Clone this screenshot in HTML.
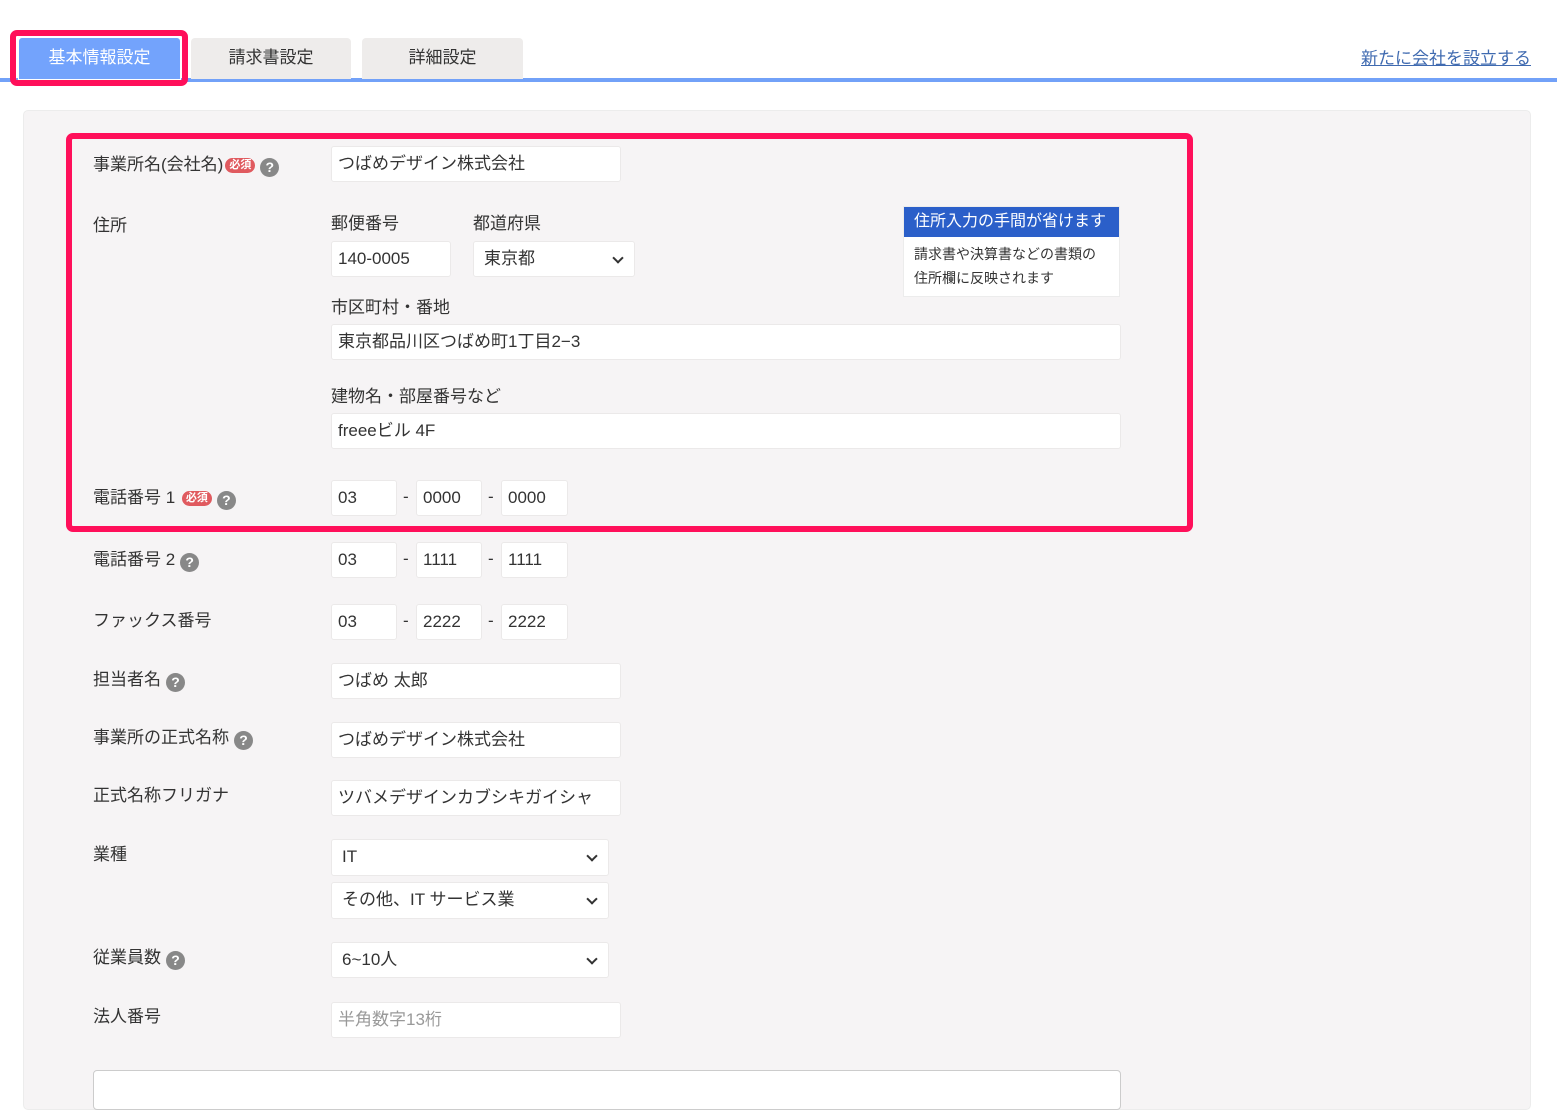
<!DOCTYPE html>
<html><head><meta charset="utf-8">
<style>
*{margin:0;padding:0;box-sizing:border-box}
body{width:1557px;height:1080px;overflow:hidden;background:#fff;font-family:"Liberation Sans","Noto Sans CJK JP",sans-serif;color:#333;font-size:17px;position:relative}
.a{position:absolute}
.tab{position:absolute;top:38px;height:41px;line-height:40px;text-align:center;background:#eeeceb;border-radius:4px 4px 0 0;font-size:17px;color:#333}
.in{position:absolute;background:#fff;border:1px solid #ebe9e9;border-radius:3px;height:36px;line-height:34px;padding-left:6px;font-size:17px;color:#333;white-space:nowrap}
.sel{padding-left:10px}
.sel:after{content:"";position:absolute;right:12px;top:12px;width:6px;height:6px;border-right:2px solid #333;border-bottom:2px solid #333;transform:rotate(45deg)}
.lb{position:absolute;left:93px;font-size:17px;white-space:nowrap;line-height:24px}
.req{display:inline-block;background:#e05a5f;color:#fff;font-size:11px;font-weight:bold;border-radius:8px;padding:0 4px;height:15px;line-height:15px;vertical-align:2px;margin-left:2px}
.q{display:inline-block;width:19px;height:19px;border-radius:50%;background:#888;color:#fff;font-size:14px;font-weight:bold;text-align:center;line-height:19px;vertical-align:-2px;margin-left:5px}
.d{position:absolute;font-size:17px}
</style></head><body>
<div class="a" style="left:0;top:78px;width:1557px;height:4px;background:#72a1f8"></div>
<div class="tab" style="left:18px;top:37px;width:163px;height:43px;background:#73a3fc;color:#fff;border:1px solid #fff">基本情報設定</div>
<div class="a" style="left:10px;top:30px;width:178px;height:56px;border:6px solid #ff0f5a;border-radius:7px"></div>
<div class="tab" style="left:191px;width:160px">請求書設定</div>
<div class="tab" style="left:362px;width:161px">詳細設定</div>
<div class="a" style="left:1361px;top:44px;font-size:17px;color:#3f6ab0;text-decoration:underline">新たに会社を設立する</div>

<div class="a" style="left:23px;top:110px;width:1508px;height:1000px;background:#f6f4f5;border:1px solid #ececec;border-radius:5px"></div>

<div class="lb" style="top:153px">事業所名(会社名)<span class="req">必須</span><span class="q">?</span></div>
<div class="in" style="left:331px;top:146px;width:290px">つばめデザイン株式会社</div>

<div class="lb" style="top:214px">住所</div>
<div class="d" style="left:331px;top:209px">郵便番号</div>
<div class="d" style="left:473px;top:209px">都道府県</div>
<div class="in" style="left:331px;top:241px;width:120px">140-0005</div>
<div class="in sel" style="left:473px;top:241px;width:162px">東京都</div>
<div class="a" style="left:903px;top:206px;width:217px;height:91px;background:#fff;border:1px solid #ececec">
<div style="background:#2b5fc9;color:#fff;height:30px;line-height:29px;padding-left:10px;font-size:16px">住所入力の手間が省けます</div>
<div style="padding:5px 0 0 10px;font-size:14px;line-height:24px;color:#333">請求書や決算書などの書類の<br>住所欄に反映されます</div>
</div>
<div class="d" style="left:331px;top:293px">市区町村・番地</div>
<div class="in" style="left:331px;top:324px;width:790px">東京都品川区つばめ町1丁目2−3</div>
<div class="d" style="left:331px;top:382px">建物名・部屋番号など</div>
<div class="in" style="left:331px;top:413px;width:790px">freeeビル 4F</div>

<div class="lb" style="top:486px">電話番号 1 <span class="req">必須</span><span class="q">?</span></div>
<div class="in" style="left:331px;top:480px;width:66px">03</div><div class="d" style="left:403px;top:487px">-</div>
<div class="in" style="left:416px;top:480px;width:66px">0000</div><div class="d" style="left:488px;top:487px">-</div>
<div class="in" style="left:501px;top:480px;width:67px">0000</div>

<div class="a" style="left:66px;top:133px;width:1127px;height:399px;border:6px solid #ff0f5a;border-radius:7px"></div>

<div class="lb" style="top:548px">電話番号 2<span class="q">?</span></div>
<div class="in" style="left:331px;top:542px;width:66px">03</div><div class="d" style="left:403px;top:549px">-</div>
<div class="in" style="left:416px;top:542px;width:66px">1111</div><div class="d" style="left:488px;top:549px">-</div>
<div class="in" style="left:501px;top:542px;width:67px">1111</div>

<div class="lb" style="top:609px">ファックス番号</div>
<div class="in" style="left:331px;top:604px;width:66px">03</div><div class="d" style="left:403px;top:611px">-</div>
<div class="in" style="left:416px;top:604px;width:66px">2222</div><div class="d" style="left:488px;top:611px">-</div>
<div class="in" style="left:501px;top:604px;width:67px">2222</div>

<div class="lb" style="top:668px">担当者名<span class="q">?</span></div>
<div class="in" style="left:331px;top:663px;width:290px">つばめ 太郎</div>
<div class="lb" style="top:726px">事業所の正式名称<span class="q">?</span></div>
<div class="in" style="left:331px;top:722px;width:290px">つばめデザイン株式会社</div>
<div class="lb" style="top:784px">正式名称フリガナ</div>
<div class="in" style="left:331px;top:780px;width:290px">ツバメデザインカブシキガイシャ</div>
<div class="lb" style="top:843px">業種</div>
<div class="in sel" style="left:331px;top:839px;width:278px;height:37px">IT</div>
<div class="in sel" style="left:331px;top:882px;width:278px;height:37px">その他、IT サービス業</div>
<div class="lb" style="top:946px">従業員数<span class="q">?</span></div>
<div class="in sel" style="left:331px;top:942px;width:278px">6~10人</div>
<div class="lb" style="top:1005px">法人番号</div>
<div class="in" style="left:331px;top:1002px;width:290px;color:#999">半角数字13桁</div>
<div class="a" style="left:93px;top:1070px;width:1028px;height:40px;background:#fff;border:1px solid #ccc;border-radius:4px"></div>
</body></html>
